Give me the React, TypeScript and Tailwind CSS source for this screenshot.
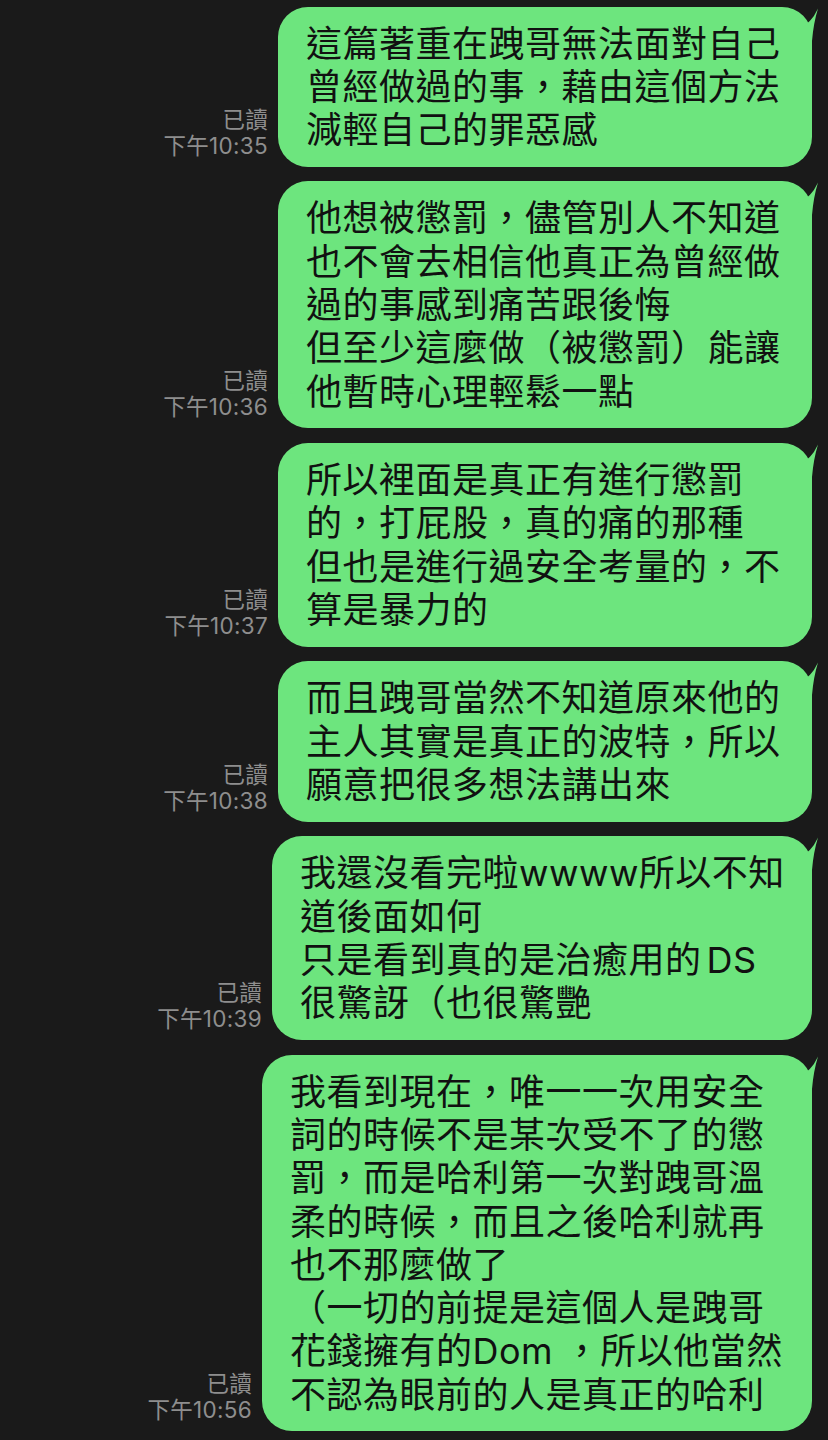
import React from "react";

type Msg = { time: string; w: string; lines: React.ReactNode[] };

const messages: Msg[] = [
  {
    time: "下午10:35",
    w: "w-[534px]",
    lines: ["這篇著重在跩哥無法面對自己", "曾經做過的事，藉由這個方法", "減輕自己的罪惡感"],
  },
  {
    time: "下午10:36",
    w: "w-[534px]",
    lines: [
      "他想被懲罰，儘管別人不知道",
      "也不會去相信他真正為曾經做",
      "過的事感到痛苦跟後悔",
      "但至少這麼做（被懲罰）能讓",
      "他暫時心理輕鬆一點",
    ],
  },
  {
    time: "下午10:37",
    w: "w-[534px]",
    lines: ["所以裡面是真正有進行懲罰", "的，打屁股，真的痛的那種", "但也是進行過安全考量的，不", "算是暴力的"],
  },
  {
    time: "下午10:38",
    w: "w-[534px]",
    lines: ["而且跩哥當然不知道原來他的", "主人其實是真正的波特，所以", "願意把很多想法講出來"],
  },
  {
    time: "下午10:39",
    w: "w-[540px]",
    lines: [
      "我還沒看完啦wwww所以不知",
      "道後面如何",
      <>
        只是看到真的是治癒用的<span className="ml-[5px]">DS</span>
      </>,
      "很驚訝（也很驚艷",
    ],
  },
  {
    time: "下午10:56",
    w: "w-[550px]",
    lines: [
      "我看到現在，唯一一次用安全",
      "詞的時候不是某次受不了的懲",
      "罰，而是哈利第一次對跩哥溫",
      "柔的時候，而且之後哈利就再",
      "也不那麼做了",
      "（一切的前提是這個人是跩哥",
      "花錢擁有的Dom ，所以他當然",
      "不認為眼前的人是真正的哈利",
    ],
  },
];

function Tail() {
  return (
    <svg
      className="absolute top-0 right-[-8px]"
      width="30"
      height="40"
      viewBox="0 0 30 40"
    >
      <path d="M8 22 Q21 17 28 1.5 Q23.5 16 22 34 L8 34 Z" fill="#6de57e" />
    </svg>
  );
}

export default function App() {
  return (
    <div className="min-h-screen bg-[#1a1a1a] pt-[6.5px] pr-[16px] pb-[10px] flex flex-col items-end gap-[14.6px] font-['Inter','Noto_Sans_CJK_TC',sans-serif]">
      {messages.map((m, i) => (
        <div key={i} className="flex items-end gap-[10px]">
          <div className="flex flex-col items-end text-[22.5px] leading-[26px] tracking-[0.3px] text-[#8e8e8e] mb-[8px]">
            <span>已讀</span>
            <span>{m.time}</span>
          </div>
          <div
            className={
              "relative rounded-[30px] bg-[#6de57e] pl-[28px] pt-[16px] pb-[14.5px] text-[36px] leading-[43.3px] tracking-[0.5px] text-[#111111] " +
              m.w
            }
          >
            <Tail />
            {m.lines.map((l, j) => (
              <div key={j} className="whitespace-nowrap relative">
                {l}
              </div>
            ))}
          </div>
        </div>
      ))}
    </div>
  );
}
